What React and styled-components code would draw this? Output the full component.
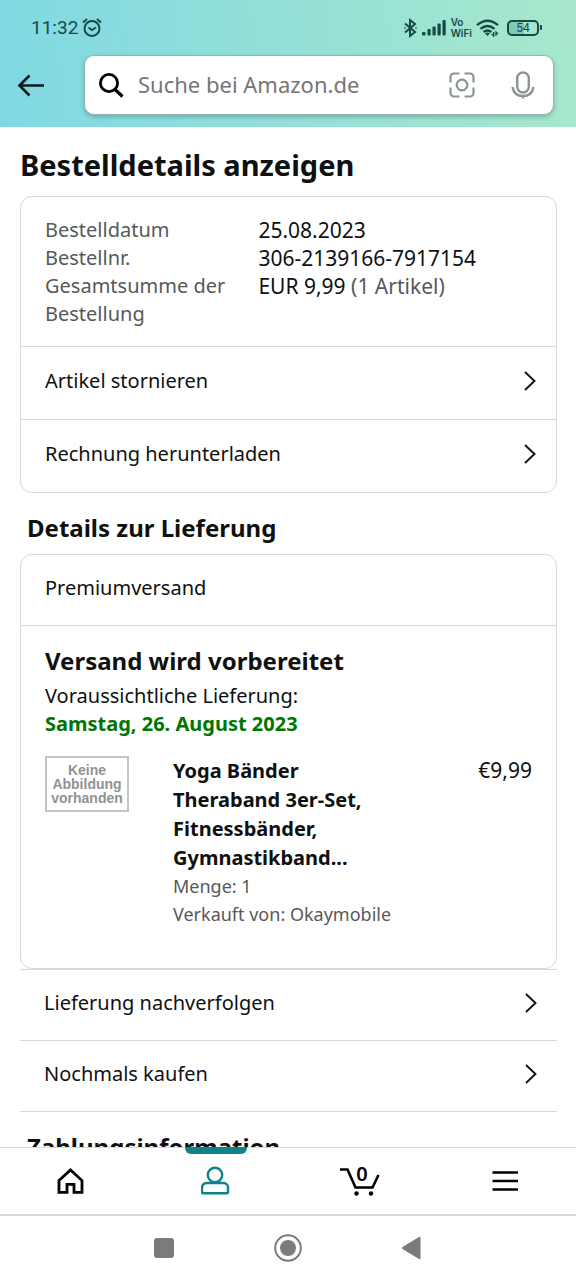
import React from 'react';
import styled, { createGlobalStyle } from 'styled-components';

const ink = '#0f1111';
const muted = '#565959';
const line = '#d5d9d9';
const teal = '#0f828c';
const status = '#164a46';

const GlobalStyle = createGlobalStyle`
  *, *::before, *::after { box-sizing: border-box; }
  body {
    margin: 0;
    background: #fff;
    color: ${ink};
    font: 20px/28px "Noto Sans", "Open Sans", sans-serif;
  }
  h1, h2, h3, p, dl, dd, ul { margin: 0; padding: 0; }
  button { border: 0; padding: 0; background: none; color: inherit; font: inherit; cursor: pointer; }
  a { color: inherit; text-decoration: none; }
  svg { display: block; flex: none; }
`;

const Screen = styled.div`
  height: 100vh;
  display: flex;
  flex-direction: column;
`;

const Header = styled.header`
  flex: none;
  background: linear-gradient(84deg, #80d8e3, #a7e8cb);
  padding-bottom: 12px;
`;

const StatusBar = styled.div`
  height: 55px;
  padding: 0 34px 0 31px;
  display: flex;
  align-items: center;
  justify-content: space-between;
  color: ${status};
  font-family: Roboto, sans-serif;
`;

const StatusGroup = styled.div`
  display: flex;
  align-items: center;
  gap: ${(p) => p.$gap}px;
`;

const Clock = styled.time`
  font-size: 19px;
`;

const Carrier = styled.span`
  font: 600 10px/11px Inter, sans-serif;
`;

const Battery = styled.span`
  display: flex;
  align-items: center;
  font-size: 12px;
  line-height: 12px;
  margin-left: 4px;

  &::after {
    content: "";
    width: 2px;
    height: 5px;
    margin-left: 1px;
    border-radius: 0 1px 1px 0;
    background: ${status};
  }
`;

const BatteryLevel = styled.span`
  width: 32px;
  height: 16px;
  display: grid;
  place-items: center;
  border: 2px solid ${status};
  border-radius: 5px;
  background: linear-gradient(90deg, #7fc9b9 54%, transparent 54%);
`;

const SearchRow = styled.div`
  display: flex;
  align-items: center;
  padding: 0 22px 0 17px;
  gap: 39px;
`;

const SearchBox = styled.form`
  flex: 1;
  min-width: 0;
  height: 60px;
  display: flex;
  align-items: center;
  padding: 0 18px 0 14px;
  border: 1px solid #93b3b4;
  border-radius: 10px;
  background: #fff;
  box-shadow: 0 2px 4px rgba(20, 70, 70, 0.3);
`;

const SearchInput = styled.input`
  flex: 1;
  min-width: 0;
  margin: 0 14px;
  padding: 0 0 2px;
  border: 0;
  outline: 0;
  background: none;
  font: 22px/30px "Noto Sans", "Open Sans", sans-serif;

  &::placeholder { color: #767676; opacity: 1; }
`;

const SearchTools = styled.div`
  display: flex;
  align-items: center;
  gap: 36px;
`;

const Content = styled.main`
  flex: 1;
  min-height: 0;
  overflow-y: auto;
  scrollbar-width: none;
  padding: 18px 19px 24px 20px;
`;

const Title = styled.h1`
  font-size: 29px;
  line-height: 40px;
  margin-bottom: 11px;
`;

const SectionTitle = styled.h2`
  font-size: 24px;
  line-height: 34px;
  padding: 18px 7px 9px;
`;

const Card = styled.section`
  border: 1px solid ${line};
  border-radius: 12px;
`;

const OrderFacts = styled.dl`
  display: grid;
  grid-template-columns: 5fr 7fr;
  column-gap: 18px;
  padding: 19px 24px 18px;
`;

const Term = styled.dt`
  color: ${muted};
`;

const Fact = styled.dd`
  font-size: 21px;
`;

const Soft = styled.span`
  color: ${muted};
`;

const RowLink = styled.a`
  display: flex;
  align-items: center;
  justify-content: space-between;
  height: ${(p) => p.$height}px;
  padding: 0 19px 4px 24px;
  border-top: 1px solid ${line};
`;

const Actions = styled.nav`
  border-bottom: 1px solid ${line};
`;

const ShippingSpeed = styled.p`
  padding: 19px 24px 23px;
`;

const Shipment = styled.div`
  padding: 18px 24px 40px;
  border-top: 1px solid ${line};
`;

const ShipmentTitle = styled.h3`
  font-size: 24px;
  line-height: 34px;
  margin-bottom: 4px;
`;

const Arrival = styled.p`
  font-weight: 700;
  color: #007600;
`;

const Item = styled.article`
  display: grid;
  grid-template-columns: 84px 224px 1fr;
  column-gap: 44px;
  margin-top: 18px;
`;

const NoImage = styled.div`
  height: 56px;
  display: grid;
  place-items: center;
  border: 2px solid #c4c4c4;
  color: #929292;
  font: 700 14px/14px "Liberation Sans", Arial, sans-serif;
  text-align: center;
`;

const ItemName = styled.h3`
  font-size: 20px;
  line-height: 29px;
`;

const ItemMeta = styled.p`
  font-size: 18px;
  color: ${muted};
`;

const Price = styled.p`
  font-size: 21px;
  line-height: 29px;
  text-align: right;
`;

const TabBar = styled.nav`
  flex: none;
  height: 69px;
  display: grid;
  grid-template-columns: repeat(4, 1fr);
  border-top: 1px solid ${line};
  border-bottom: 2px solid ${line};
  background: #fff;
`;

const Tab = styled.a`
  position: relative;
  display: grid;
  place-items: center;
  color: ${(p) => (p.$active ? teal : '#000')};

  &::before {
    content: "";
    display: ${(p) => (p.$active ? 'block' : 'none')};
    position: absolute;
    top: -1px;
    width: 62px;
    height: 7px;
    border-radius: 0 0 6px 6px;
    background: ${teal};
  }
`;

const CartCount = styled.span`
  position: absolute;
  top: 14px;
  font-size: 20px;
  line-height: 24px;
  font-weight: 600;
  padding-left: 4px;
`;

const SystemBar = styled.footer`
  flex: none;
  height: 64px;
  display: flex;
  align-items: center;
  justify-content: center;
  gap: 96px;
  color: #7b7b7b;
`;

const Chevron = () => (
  <svg width="14" height="22" viewBox="0 0 14 22" fill="none" stroke={ink} strokeWidth="1.900" aria-hidden="true">
    <path d="M2 2l9.500 9L2 20" />
  </svg>
);

const facts = [
  ['Bestelldatum', '25.08.2023'],
  ['Bestellnr.', '306-2139166-7917154'],
  ['Gesamtsumme der Bestellung', 'EUR 9,99', '(1 Artikel)'],
];

export default function App() {
  return (
    <Screen>
      <GlobalStyle />
      <Header>
        <StatusBar>
          <StatusGroup $gap={4}>
            <Clock>11:32</Clock>
            <svg width="20" height="20" viewBox="0 0 20 20" fill="none" stroke="currentColor" strokeWidth="2" aria-hidden="true">
              <circle cx="10" cy="10.500" r="7.500" />
              <path d="M6.500 9.500L10 12l4-2.500M1 4.500L5 1M15 1l4 3.500" />
            </svg>
          </StatusGroup>
          <StatusGroup $gap={4}>
            <svg width="15" height="20" viewBox="0 0 15 20" fill="none" stroke="currentColor" strokeWidth="2" aria-hidden="true">
              <path d="M2 5.500l10 8.500-5 4V2l5 4-10 8.500" />
              <path d="M1.500 10h1M12.500 10h1" />
            </svg>
            <svg width="25" height="16" viewBox="0 0 25 16" fill="currentColor" aria-hidden="true">
              <rect x="0" y="12" width="3.500" height="3.500" rx="1" />
              <rect x="5.500" y="9" width="3.200" height="6.500" rx="1" />
              <rect x="10.500" y="6.500" width="3.200" height="9" rx="1" />
              <rect x="15.500" y="3.500" width="3.200" height="12" rx="1" />
              <rect x="20.500" y="0" width="3.200" height="15.500" rx="1" />
            </svg>
            <Carrier>Vo<br />WiFi</Carrier>
            <svg width="23" height="18" viewBox="0 0 23 18" fill="none" stroke="currentColor" strokeWidth="2.400" aria-hidden="true">
              <path d="M1 6.200Q11.500-2.800 22 6.200M4.500 9.900q7-5.800 14 0M7.600 13q3.900-3.100 7.800 0" />
              <path d="M9 14.200q2.500-1.600 5 0L11.500 17z" fill="currentColor" stroke="none" />
              <path d="M17.700 13v4l-2-2M20 17v-4l2 2" strokeWidth="1.300" />
            </svg>
            <Battery><BatteryLevel>54</BatteryLevel></Battery>
          </StatusGroup>
        </StatusBar>
        <SearchRow>
          <button type="button" aria-label="Zurück">
            <svg width="28" height="24" viewBox="0 0 28 24" fill="none" stroke="#0b1a1c" strokeWidth="2.600" aria-hidden="true">
              <path d="M27 12.500H3M12.500 2.500l-10 10 10 10" />
            </svg>
          </button>
          <SearchBox role="search">
            <svg width="25" height="26" viewBox="0 0 25 26" fill="none" stroke="#000" strokeWidth="2.800" aria-hidden="true">
              <circle cx="10" cy="11" r="8.600" />
              <path d="M16 17.500l7.500 7" strokeWidth="3.200" />
            </svg>
            <SearchInput type="search" placeholder="Suche bei Amazon.de" aria-label="Suche bei Amazon.de" />
            <SearchTools>
              <button type="button" aria-label="Kamerasuche">
                <svg width="26" height="26" viewBox="0 0 26 26" fill="none" stroke="#8b9596" strokeWidth="2.200" aria-hidden="true">
                  <circle cx="13" cy="13" r="5.300" />
                  <path d="M10.500 1.500H5A3.500 3.500 0 0 0 1.500 5v5.500M15.500 1.500H21A3.500 3.500 0 0 1 24.500 5v5.500M24.500 15.500V21a3.500 3.500 0 0 1-3.500 3.500h-5.500M10.500 24.500H5A3.500 3.500 0 0 1 1.500 21v-5.500" />
                </svg>
              </button>
              <button type="button" aria-label="Sprachsuche">
                <svg width="24" height="28" viewBox="0 0 24 28" fill="none" stroke="#8b9596" strokeWidth="2.400" aria-hidden="true">
                  <rect x="6.200" y="1.500" width="11.600" height="20" rx="5.800" />
                  <path d="M1.500 16C2.500 22 6.500 25 12 25s9.500-3 10.500-9M12 25v2.500" />
                </svg>
              </button>
            </SearchTools>
          </SearchBox>
        </SearchRow>
      </Header>

      <Content>
        <Title>Bestelldetails anzeigen</Title>
        <Card>
          <OrderFacts>
            {facts.map(([term, value, note]) => (
              <React.Fragment key={term}>
                <Term>{term}</Term>
                <Fact>{value}{note && <Soft> {note}</Soft>}</Fact>
              </React.Fragment>
            ))}
          </OrderFacts>
          <RowLink href="#stornieren" $height={73}>Artikel stornieren<Chevron /></RowLink>
          <RowLink href="#rechnung" $height={73}>Rechnung herunterladen<Chevron /></RowLink>
        </Card>

        <SectionTitle>Details zur Lieferung</SectionTitle>
        <Card>
          <ShippingSpeed>Premiumversand</ShippingSpeed>
          <Shipment>
            <ShipmentTitle>Versand wird vorbereitet</ShipmentTitle>
            <p>Voraussichtliche Lieferung:</p>
            <Arrival>Samstag, 26. August 2023</Arrival>
            <Item>
              <NoImage>Keine<br />Abbildung<br />vorhanden</NoImage>
              <div>
                <ItemName>Yoga Bänder Theraband 3er-Set, Fitnessbänder, Gymnastikband...</ItemName>
                <ItemMeta>Menge: 1</ItemMeta>
                <ItemMeta>Verkauft von: Okaymobile</ItemMeta>
              </div>
              <Price>€9,99</Price>
            </Item>
          </Shipment>
        </Card>
        <Actions aria-label="Lieferung">
          <RowLink href="#verfolgen" $height={71}>Lieferung nachverfolgen<Chevron /></RowLink>
          <RowLink href="#nochmals" $height={71}>Nochmals kaufen<Chevron /></RowLink>
        </Actions>
        <SectionTitle>Zahlungsinformation</SectionTitle>
      </Content>

      <TabBar aria-label="Hauptmenü">
        <Tab href="#start" aria-label="Startseite">
          <svg width="30" height="30" viewBox="0 0 30 30" fill="none" stroke="currentColor" strokeWidth="2.800" aria-hidden="true">
            <path d="M2 14.500L13.500 4 25 14.500v11.800h-8v-8h-7v8H2z" />
          </svg>
        </Tab>
        <Tab href="#konto" aria-label="Mein Konto" $active>
          <svg width="30" height="30" viewBox="0 0 30 30" fill="none" stroke="currentColor" strokeWidth="2.400" aria-hidden="true">
            <circle cx="14" cy="9" r="7.200" />
            <path d="M5.500 17h17a4.500 4.500 0 0 1 4.500 4.500v4.500a1.200 1.200 0 0 1-1.200 1.200H2.200A1.200 1.200 0 0 1 1 26v-4.500A4.500 4.500 0 0 1 5.500 17z" />
          </svg>
        </Tab>
        <Tab href="#wagen" aria-label="Einkaufswagen">
          <svg width="40" height="32" viewBox="0 0 40 32" fill="none" stroke="currentColor" strokeWidth="2.600" aria-hidden="true">
            <path d="M0 4.500h7.500L15.500 22.500h17L38.500 10" />
            <circle cx="16.500" cy="28.500" r="2.200" fill="currentColor" stroke="none" />
            <circle cx="31" cy="28.500" r="2.200" fill="currentColor" stroke="none" />
          </svg>
          <CartCount>0</CartCount>
        </Tab>
        <Tab href="#menue" aria-label="Menü">
          <svg width="28" height="22" viewBox="0 0 28 22" fill="none" stroke="currentColor" strokeWidth="2.600" aria-hidden="true">
            <path d="M2.500 2.500H28M2.500 11H28M2.500 19.500H28" />
          </svg>
        </Tab>
      </TabBar>

      <SystemBar>
        <button type="button" aria-label="Letzte Apps">
          <svg width="28" height="28" viewBox="0 0 28 28" fill="currentColor" aria-hidden="true">
            <rect x="4" y="4" width="20" height="20" rx="3" />
          </svg>
        </button>
        <button type="button" aria-label="Startbildschirm">
          <svg width="28" height="28" viewBox="0 0 28 28" aria-hidden="true">
            <circle cx="14" cy="14" r="12.800" fill="none" stroke="currentColor" strokeWidth="2" />
            <circle cx="14" cy="14" r="8" fill="currentColor" />
          </svg>
        </button>
        <button type="button" aria-label="Zurück">
          <svg width="28" height="28" viewBox="0 0 28 28" fill="currentColor" aria-hidden="true">
            <path d="M4.500 13L21 3q1.500-.6 1.500 1v20q0 1.600-1.500 1L4.500 15q-1.200-1 0-2z" />
          </svg>
        </button>
      </SystemBar>
    </Screen>
  );
}
